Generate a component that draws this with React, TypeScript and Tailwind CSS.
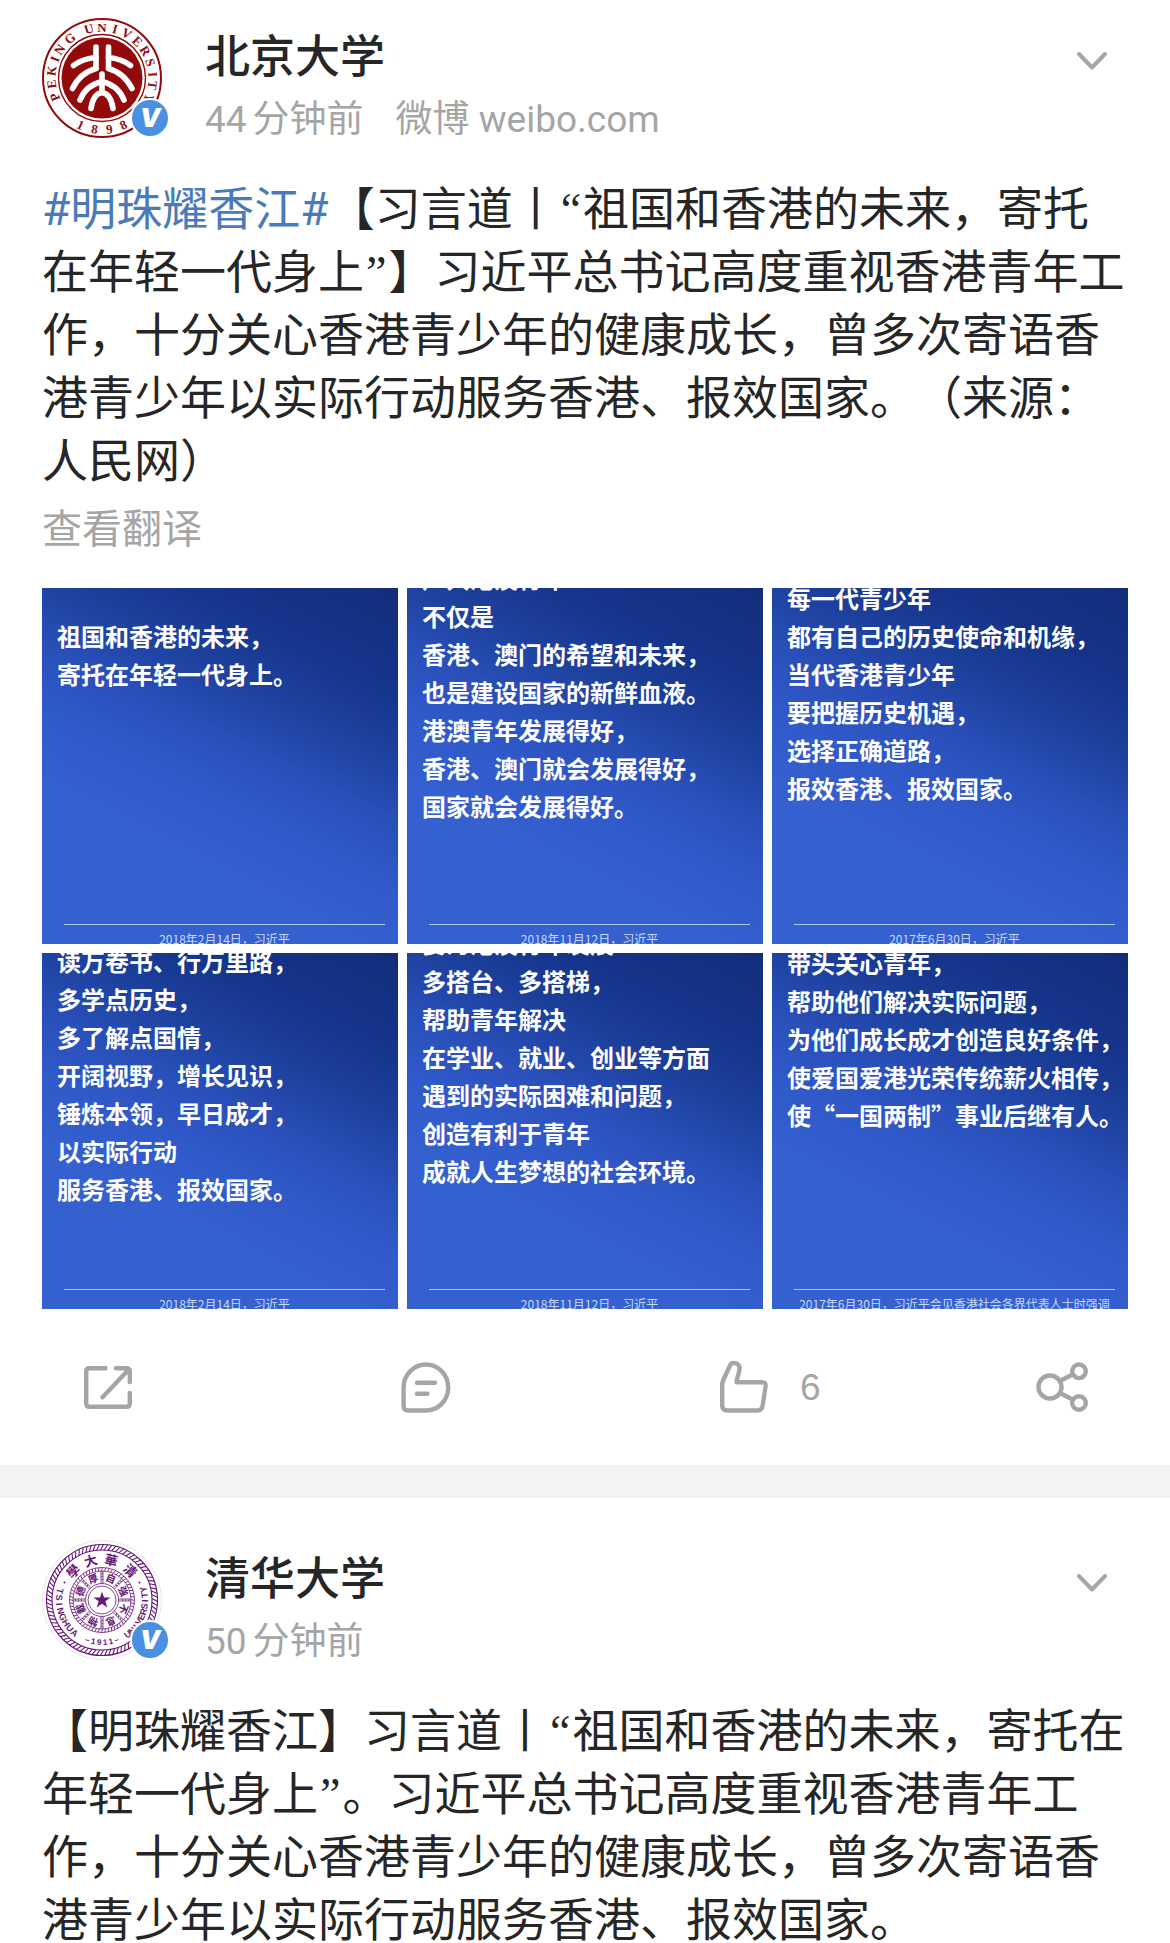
import type { ReactNode } from "react";

const RED = "#930a0c";
const PURPLE = "#661878";

type RingGlyph = { char: string; angle: number };

/* Places characters round a ring; inward glyphs have their heads towards the centre. */
function RingText({
  glyphs,
  radius,
  size,
  fill,
  family,
  inward = false,
}: {
  glyphs: RingGlyph[];
  radius: number;
  size: number;
  fill: string;
  family: string;
  inward?: boolean;
}) {
  return (
    <g fill={fill} fontSize={size} fontFamily={family} fontWeight={700} textAnchor="middle">
      {glyphs.map((g, i) => (
        <text
          key={i}
          x={60}
          y={inward ? 60 + radius : 60 - radius}
          transform={`rotate(${inward ? g.angle - 180 : g.angle} 60 60)`}
        >
          {g.char}
        </text>
      ))}
    </g>
  );
}

function spread(text: string, from: number, to: number): RingGlyph[] {
  const chars = Array.from(text);
  return chars.map((char, i) => ({ char, angle: from + ((to - from) * i) / (chars.length - 1) }));
}

const pekingAngles = [-112, -97, -82, -68, -56, -39, -15, 0, 15, 29, 44, 58, 72, 86, 98, 114];
const pekingGlyphs = Array.from("PEKINGUNIVERSITY").map((char, i) => ({ char, angle: pekingAngles[i] }));

function PekingSeal() {
  const serif = "'Liberation Serif', serif";
  return (
    <svg viewBox="0 0 120 120" className="size-30" role="img" aria-label="北京大学">
      <circle cx="60" cy="60" r="59" fill="#fff" stroke={RED} strokeWidth="2" />
      <circle cx="60" cy="60" r="43.5" fill="#fff" stroke={RED} strokeWidth="1.4" />
      <circle cx="60" cy="60" r="40.5" fill={RED} />
      <RingText glyphs={pekingGlyphs} radius={46.5} size={13} fill={RED} family={serif} />
      <RingText glyphs={spread("1898", 204.6, 155.4)} radius={56} size={13} fill={RED} family={serif} inward />
      <g fill="none" stroke="#fff" strokeWidth="5.6" strokeLinecap="round">
        <path d="M54 29V50M66.500 29V50" />
        <path d="M31.500 47.500Q41 40.500 54 39.500M88.500 47.500Q79 40.500 66.500 39.500" />
        <path d="M30.500 70.500Q38 55 54 50.500M90 70.500Q82 55 66.500 50.500" />
        <path d="M38 82Q44 67 60 63.500Q76 67 82 82M60 56V74" />
        <path d="M49 90.500Q51 76 60 74.500Q69 76 71 90.500" />
      </g>
    </svg>
  );
}

function TsinghuaSeal() {
  const sans = "'Liberation Sans', sans-serif";
  const cjk = "'Noto Sans CJK TC', sans-serif";
  const ropes = Array.from({ length: 84 }, (_, i) => (i * 360) / 84);
  const innerRopes = Array.from({ length: 60 }, (_, i) => i * 6);
  const spokes = Array.from({ length: 8 }, (_, i) => i * 45);
  return (
    <svg viewBox="0 0 120 120" className="size-30" role="img" aria-label="清华大学">
      <circle cx="60" cy="60" r="59.500" fill="#fff" stroke="#e4e4e4" />
      <g fill="none" stroke={PURPLE} strokeWidth="1.1">
        <circle cx="60" cy="60" r="55.500" />
        <circle cx="60" cy="60" r="50" />
        {ropes.map((a) => (
          <path key={a} d="M58.500 10L61.500 4.500" transform={`rotate(${a} 60 60)`} />
        ))}
      </g>
      <g fill="none" stroke={PURPLE} strokeWidth="0.8">
        <circle cx="60" cy="60" r="32.500" />
        <circle cx="60" cy="60" r="29" />
        <circle cx="60" cy="60" r="16.500" />
        <circle cx="60" cy="60" r="14" />
        {innerRopes.map((a) => (
          <path key={a} d="M59.500 31L60.500 27.500" transform={`rotate(${a} 60 60)`} />
        ))}
        {spokes.map((a) => (
          <path key={a} d="M59 31V43.500M61 31V43.500M59 34l2 -1M59 37l2 -1M59 40l2 -1" transform={`rotate(${a} 60 60)`} />
        ))}
      </g>
      <RingText
        glyphs={[
          { char: "學", angle: -45 },
          { char: "大", angle: -16 },
          { char: "華", angle: 13 },
          { char: "清", angle: 44 },
        ]}
        radius={36}
        size={13}
        fill={PURPLE}
        family={cjk}
      />
      <RingText glyphs={spread("自強不息物載德厚", 22.5, 337.5)} radius={19.5} size={10} fill={PURPLE} family={cjk} />
      <RingText glyphs={spread("TSINGHUA", 282, 220)} radius={46} size={9} fill={PURPLE} family={sans} inward />
      <RingText glyphs={spread("UNIVERSITY", 143, 76)} radius={46} size={9} fill={PURPLE} family={sans} inward />
      <RingText glyphs={spread("–1911–", 200, 160)} radius={45} size={8} fill={PURPLE} family={sans} inward />
      <circle cx="22.500" cy="42.500" r="1" fill={PURPLE} />
      <circle cx="97.500" cy="42.500" r="1" fill={PURPLE} />
      <path
        d="M60 51.500L62 57.500H68.500L63.300 61.300L65.300 67.500L60 63.700L54.700 67.500L56.700 61.300L51.500 57.500H58Z"
        fill={PURPLE}
      />
    </svg>
  );
}

function PostHeader({ seal, name, time, source }: { seal: ReactNode; name: string; time: [string, string]; source?: string }) {
  return (
    <header className="flex items-start">
      <div className="relative shrink-0">
        {seal}
        <span className="absolute -right-2 bottom-0 flex size-10 items-center justify-center rounded-full border-2 border-white bg-[#4a90e2] font-[Inter,sans-serif] text-[26px] leading-none font-black text-white italic">
          V
        </span>
      </div>
      <div className="ml-[43px] flex-1">
        <h2 className="mt-[7px] text-[45px] leading-[66px] font-medium text-[#262626]">{name}</h2>
        <p className="flex items-baseline text-[37px] leading-[58px] text-[#a5a5a5]">
          <span>{time[0]}</span>
          <span className="ml-1.5">{time[1]}</span>
          {source && <span className="ml-8">{source}</span>}
        </p>
      </div>
      <button type="button" aria-label="更多" className="mt-[31px] mr-5 text-[#a6a6a6]">
        <svg viewBox="0 0 32 24" className="h-6 w-8" fill="none" stroke="currentColor" strokeWidth="4" strokeLinecap="round" strokeLinejoin="round">
          <path d="M3 5L16 18.500L29 5" />
        </svg>
      </button>
    </header>
  );
}

type Slide = { lines: string[]; offset: string; footer: string };

const slides: Slide[] = [
  { offset: "pt-[29px]", footer: "2018年2月14日，习近平", lines: ["祖国和香港的未来，", "寄托在年轻一代身上。"] },
  {
    offset: "-mt-[29px]",
    footer: "2018年11月12日，习近平",
    lines: ["广大港澳青年", "不仅是", "香港、澳门的希望和未来，", "也是建设国家的新鲜血液。", "港澳青年发展得好，", "香港、澳门就会发展得好，", "国家就会发展得好。"],
  },
  {
    offset: "-mt-[9px]",
    footer: "2017年6月30日，习近平",
    lines: ["每一代青少年", "都有自己的历史使命和机缘，", "当代香港青少年", "要把握历史机遇，", "选择正确道路，", "报效香港、报效国家。"],
  },
  {
    offset: "-mt-[11px]",
    footer: "2018年2月14日，习近平",
    lines: ["读万卷书、行万里路，", "多学点历史，", "多了解点国情，", "开阔视野，增长见识，", "锤炼本领，早日成才，", "以实际行动", "服务香港、报效国家。"],
  },
  {
    offset: "-mt-[29px]",
    footer: "2018年11月12日，习近平",
    lines: ["要为港澳青年发展", "多搭台、多搭梯，", "帮助青年解决", "在学业、就业、创业等方面", "遇到的实际困难和问题，", "创造有利于青年", "成就人生梦想的社会环境。"],
  },
  {
    offset: "-mt-[9px]",
    footer: "2017年6月30日，习近平会见香港社会各界代表人士时强调",
    lines: ["带头关心青年，", "帮助他们解决实际问题，", "为他们成长成才创造良好条件，", "使爱国爱港光荣传统薪火相传，", "使“一国两制”事业后继有人。"],
  },
];

function SlideCard({ slide }: { slide: Slide }) {
  return (
    <figure className="flex aspect-square flex-col justify-between overflow-hidden bg-[linear-gradient(207deg,#132d7a_0%,#15348a_18%,#1c409c_31%,#294fb9_44%,#3059c9_56%,#3560d0_70%)] font-['Noto_Sans_CJK_SC',sans-serif] text-white">
      <blockquote className={`${slide.offset} pl-[15px] text-[24px] leading-[38px] font-bold whitespace-nowrap`}>
        {slide.lines.map((line) => (
          <p key={line}>{line}</p>
        ))}
      </blockquote>
      <figcaption className="mr-[13px] -mb-[6px] ml-[22px] border-t border-[#a9cbee] pt-[3px] text-center text-[12px] leading-[22px] whitespace-nowrap text-[#c8d9f7]">
        {slide.footer}
      </figcaption>
    </figure>
  );
}

function Actions() {
  const icon = "h-[54px] w-[52px] shrink-0";
  const common = { viewBox: "0 0 52 54", fill: "none", stroke: "currentColor", strokeWidth: 4.4, strokeLinecap: "round", strokeLinejoin: "round" } as const;
  return (
    <div className="flex h-[156px] items-center justify-between px-10 text-[#a5a5a5]">
      <button type="button" aria-label="转发" className="w-[52px]">
        <svg {...common} className={icon}>
          <path d="M23.500 8.300H7.500Q4.200 8.300 4.200 11.600V43.400Q4.200 46.700 7.500 46.700H44.500Q47.800 46.700 47.800 43.400V33" />
          <path d="M34 8.300H44.500Q47.800 8.300 47.800 11.600V22M47 9.300L20.500 37.300" />
        </svg>
      </button>
      <button type="button" aria-label="评论" className="w-[52px]">
        <svg {...common} className={icon}>
          <path d="M26 4.500C38 4.500 48.200 14.500 48.200 27.500S38 50.500 26 50.500H8Q3.600 50.500 3.600 46V27.500C3.600 14.500 14 4.500 26 4.500Z" />
          <path d="M17 22.800H35M17 33.800H27.500" />
        </svg>
      </button>
      <button type="button" aria-label="赞" className="flex w-[52px] items-center gap-[30px]">
        <svg {...common} className={icon}>
          <path d="M4.200 45.500V25Q4.200 22.500 5.300 20L12 5.500C13.500 1.800 21.500 2 21.500 8.500C21.500 13 18.500 19 18.500 22.300H43.500Q48 22.300 47.600 26L44.800 45Q44 50.500 39 50.500H9.200Q4.200 50.500 4.200 45.500Z" />
        </svg>
        <span className="font-['Liberation_Sans',sans-serif] text-[37px] leading-none">6</span>
      </button>
      <button type="button" aria-label="分享" className="w-[52px]">
        <svg {...common} className={icon}>
          <circle cx="14" cy="27" r="11.500" />
          <circle cx="43" cy="11.300" r="6.800" />
          <circle cx="43" cy="43" r="6.800" />
          <path d="M24 21L36.500 14.500M24 33L36.500 39.500" />
        </svg>
      </button>
    </div>
  );
}

function PostText({ children }: { children: ReactNode }) {
  return <p className="mt-[29px] text-[46px] leading-[63px] whitespace-nowrap text-[#262626]">{children}</p>;
}

function Quote({ children }: { children: string }) {
  return <span className="px-0.5 font-['Liberation_Serif',serif] leading-none">{children}</span>;
}

export default function App() {
  return (
    <main
      lang="zh-CN"
      className="h-screen overflow-hidden bg-white font-[Roboto,'Noto_Sans_CJK_SC',sans-serif] [text-spacing-trim:space-all]"
    >
      <article className="px-[42px] pt-[18px]">
        <PostHeader seal={<PekingSeal />} name="北京大学" time={["44", "分钟前"]} source="微博 weibo.com" />
        <PostText>
          <a href="#topic" className="text-[#4a7ab8]">
            #明珠耀香江#
          </a>
          【习言道丨<Quote>“</Quote>祖国和香港的未来，寄托
          <br />
          在年轻一代身上<Quote>”</Quote>】习近平总书记高度重视香港青年工
          <br />
          作，十分关心香港青少年的健康成长，曾多次寄语香
          <br />
          港青少年以实际行动服务香港、报效国家。（来源：
          <br />
          人民网）
        </PostText>
        <button type="button" className="mt-[9px] block text-[40px] leading-[56px] text-[#a5a5a5]">
          查看翻译
        </button>
        <div className="mt-[30px] grid grid-cols-3 gap-[9px]">
          {slides.map((slide, i) => (
            <SlideCard key={i} slide={slide} />
          ))}
        </div>
        <Actions />
      </article>
      <hr className="h-[33px] border-0 bg-[#f3f3f3]" />
      <article className="px-[42px] pt-[42px]">
        <PostHeader seal={<TsinghuaSeal />} name="清华大学" time={["50", "分钟前"]} />
        <PostText>
          【明珠耀香江】习言道丨<Quote>“</Quote>祖国和香港的未来，寄托在
          <br />
          年轻一代身上<Quote>”</Quote>。习近平总书记高度重视香港青年工
          <br />
          作，十分关心香港青少年的健康成长，曾多次寄语香
          <br />
          港青少年以实际行动服务香港、报效国家。
        </PostText>
      </article>
    </main>
  );
}
